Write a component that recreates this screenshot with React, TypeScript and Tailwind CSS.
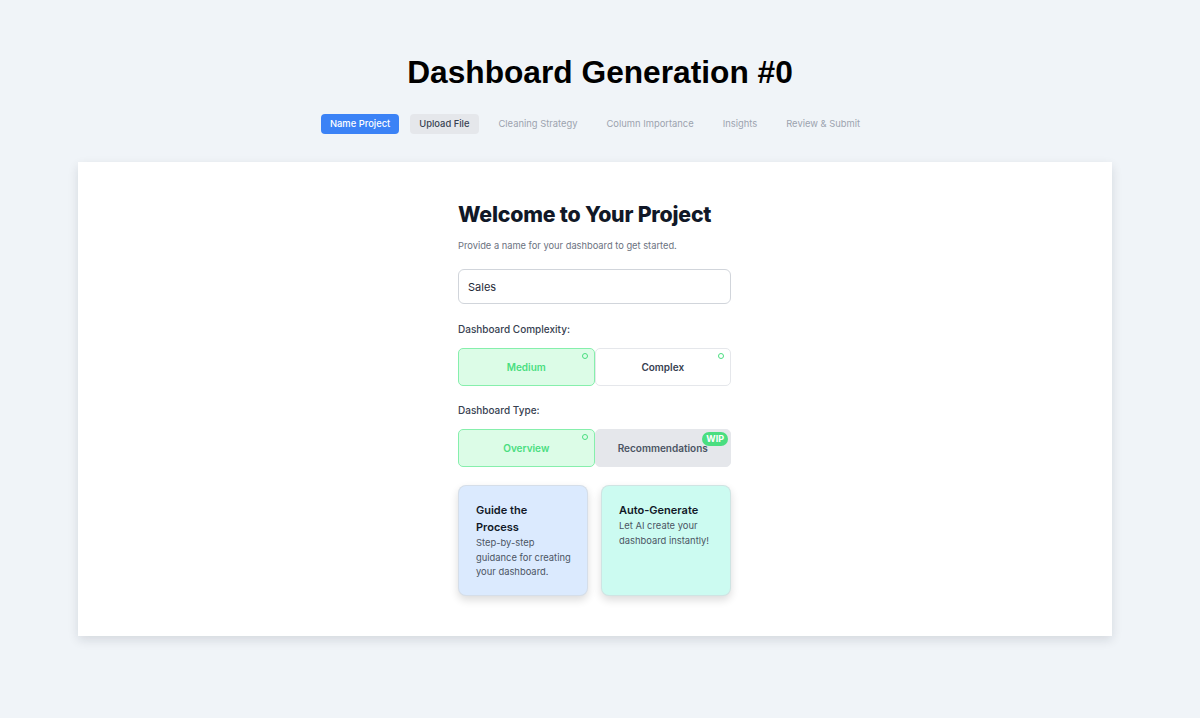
import { useState } from 'react';

const steps = ['Name Project', 'Upload File', 'Cleaning Strategy', 'Column Importance', 'Insights', 'Review & Submit'];

function Dot() {
  return <span className="absolute right-[6px] top-[4px] h-[6px] w-[6px] rounded-full border border-[#4ade80]" />;
}

export default function App() {
  const [name, setName] = useState('Sales');
  const [complexity, setComplexity] = useState('Medium');
  const [kind, setKind] = useState('Overview');

  return (
    <div className="min-h-[718px] bg-[#f0f4f8] pt-[53px]" style={{ fontFamily: 'Inter, "Noto Sans", sans-serif' }}>
      <h1 className="text-center text-[31.7px] font-bold leading-[38px] text-black" style={{ fontFamily: '"Liberation Sans", Arial, sans-serif' }}>
        Dashboard Generation #0
      </h1>

      <div className="mt-[23px] flex justify-center gap-[11px] pr-[10px]">
        {steps.map((s, i) => (
          <div
            key={s}
            className={
              i === 0
                ? 'h-[20px] rounded-[4px] bg-[#3b82f6] px-[9px] text-[9.4px] font-medium leading-[20px] text-white'
                : i === 1
                ? 'h-[20px] rounded-[4px] bg-[#e5e7eb] px-[9px] text-[9.4px] font-medium leading-[20px] text-[#374151]'
                : 'h-[20px] px-[9px] text-[9.4px] leading-[20px] text-[#9ca3af]'
            }
          >
            {s}
          </div>
        ))}
      </div>

      <div className="ml-[78px] mt-[28px] w-[1034px] bg-white pb-[40px] pt-[38px] shadow-[0_4px_10px_rgba(15,23,42,0.12)]">
        <div className="ml-[380px] w-[273px]">
          <h2 className="text-[21.3px] font-extrabold leading-[28px] tracking-[-0.2px] text-[#111827]">Welcome to Your Project</h2>
          <p className="mt-[11px] text-[9.3px] leading-[14px] text-[#6b7280]">Provide a name for your dashboard to get started.</p>

          <input
            value={name}
            onChange={(e) => setName(e.target.value)}
            className="mt-[16px] h-[35px] w-full rounded-[6px] border border-[#d1d5db] px-[9px] text-[11px] text-[#1f2937] outline-none"
          />

          <p className="mt-[18px] text-[10px] font-medium leading-[14px] text-[#374151]">Dashboard Complexity:</p>
          <div className="mt-[12px] flex">
            {['Medium', 'Complex'].map((c) => (
              <button
                key={c}
                onClick={() => setComplexity(c)}
                className={
                  complexity === c
                    ? 'relative h-[38px] flex-1 rounded-[5px] border border-[#86efac] bg-[#dcfce7] text-[10px] font-semibold text-[#4ade80]'
                    : 'relative h-[38px] flex-1 rounded-[5px] border border-[#e5e7eb] bg-white text-[10px] font-semibold text-[#374151]'
                }
              >
                {c}
                <Dot />
              </button>
            ))}
          </div>

          <p className="mt-[17px] text-[10px] font-medium leading-[14px] text-[#374151]">Dashboard Type:</p>
          <div className="mt-[12px] flex">
            <button
              onClick={() => setKind('Overview')}
              className={
                kind === 'Overview'
                  ? 'relative h-[38px] flex-1 rounded-[5px] border border-[#86efac] bg-[#dcfce7] text-[10px] font-semibold text-[#4ade80]'
                  : 'relative h-[38px] flex-1 rounded-[5px] border border-[#e5e7eb] bg-white text-[10px] font-semibold text-[#374151]'
              }
            >
              Overview
              <Dot />
            </button>
            <button className="relative h-[38px] flex-1 cursor-not-allowed rounded-[5px] border border-[#e5e7eb] bg-[#e5e7eb] text-[10px] font-semibold text-[#4b5563]">
              Recommendations
              <span className="absolute right-[2px] top-[2px] rounded-full bg-[#4ade80] px-[4px] text-[9px] font-bold leading-[14px] text-white">WIP</span>
            </button>
          </div>

          <div className="mt-[18px] flex gap-[13px]">
            <div className="h-[111px] w-[130px] rounded-[8px] border border-[#d1d5db]/60 bg-[#dbeafe] pl-[17px] pr-[6px] pt-[16px] shadow-[0_4px_9px_rgba(0,0,0,0.14)]">
              <p className="w-[80px] text-[11px] font-semibold leading-[17px] text-[#111827]">Guide the Process</p>
              <p className="w-[100px] text-[9.4px] leading-[14.5px] text-[#4b5563]">Step-by-step guidance for creating your dashboard.</p>
            </div>
            <div className="h-[111px] flex-1 rounded-[8px] border border-[#d1d5db]/60 bg-[#ccfbf1] pl-[17px] pr-[6px] pt-[16px] shadow-[0_4px_9px_rgba(0,0,0,0.14)]">
              <p className="text-[11px] font-semibold leading-[17px] text-[#111827]">Auto-Generate</p>
              <p className="w-[96px] text-[9.4px] leading-[14.5px] text-[#4b5563]">Let AI create your dashboard instantly!</p>
            </div>
          </div>
        </div>
      </div>
    </div>
  );
}
